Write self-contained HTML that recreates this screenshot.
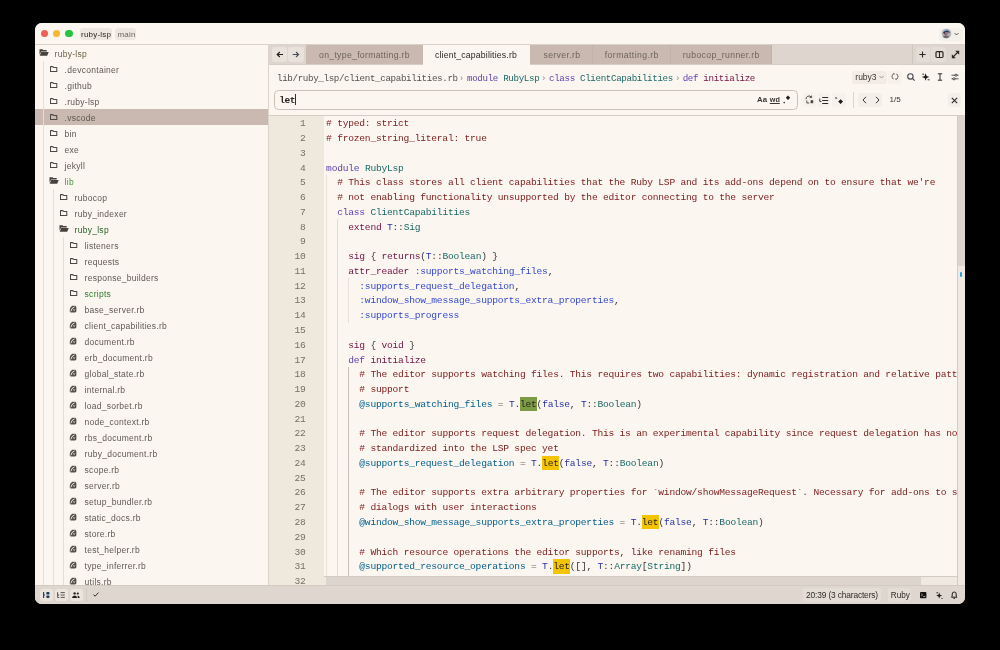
<!DOCTYPE html><html><head><meta charset="utf-8"><style>
*{margin:0;padding:0;box-sizing:border-box}
html,body{width:1000px;height:650px;background:#000;overflow:hidden}
body{position:relative;font-family:"Liberation Sans",sans-serif}
#win{will-change:transform;position:absolute;left:35px;top:23px;width:930px;height:581px;border-radius:7px;overflow:hidden;background:#fbf7f0}
.a{position:absolute;white-space:pre}
svg{display:block;overflow:visible}
.mono{font-family:"Liberation Mono",monospace}
.c{color:#7e2020}
.k{color:#5a3fb0}
.t{color:#1a6868}
.f{color:#721045}
.s{color:#3548cf}
.iv{color:#005e8b}
.b{color:#2630a6}
.hl{color:#2a2520}
.op{color:#6a6460}
.hlc{color:#2a2520}
</style></head><body><div id="win"><div class="a" style="left:0.00px;top:0.00px;width:930.00px;height:21.00px;background:#fbf7f0"></div>
<div class="a" style="left:0.00px;top:21.00px;width:930.00px;height:1.00px;background:#d9d1ca"></div>
<div class="a" style="left:5.50px;top:6.70px;width:7.60px;height:7.60px;background:#ee5f58;border-radius:50%"></div>
<div class="a" style="left:17.80px;top:6.70px;width:7.60px;height:7.60px;background:#f4b932;border-radius:50%"></div>
<div class="a" style="left:30.10px;top:6.70px;width:7.60px;height:7.60px;background:#27c23f;border-radius:50%"></div>
<div class="a" style="left:44.60px;top:4.80px;width:32.40px;height:11.80px;background:#ede7e0;border-radius:3px"></div>
<div class="a" style="left:46.00px;top:5.60px;font-size:8px;letter-spacing:0.22px;line-height:11.5px;color:#221f1c">ruby-lsp</div>
<div class="a" style="left:80.20px;top:4.80px;width:21.20px;height:11.80px;background:#ede7e0;border-radius:3px"></div>
<div class="a" style="left:82.50px;top:5.60px;font-size:8px;letter-spacing:0.2px;line-height:11.5px;color:#6e665f">main</div>
<div class="a" style="left:233.00px;top:22.00px;width:1.00px;height:540.00px;background:#dcd4cc"></div>
<div class="a" style="left:0.00px;top:86.00px;width:233.00px;height:16.00px;background:#c9b9b0"></div>
<div class="a" style="left:8.00px;top:38.00px;width:1.00px;height:524.00px;background:#e5ded6"></div>
<div class="a" style="left:18.00px;top:166.00px;width:1.00px;height:396.00px;background:#e5ded6"></div>
<div class="a" style="left:28.00px;top:214.00px;width:1.00px;height:348.00px;background:#e5ded6"></div>
<div class="a" style="left:4.40px;top:26.30px;line-height:0"><svg width="10" height="7" viewBox="0 0 10 7"><path d="M0.5 0.3h3l0.8 0.8h3.4v1.3H2.2L0.5 5.8z" fill="#46413d"/><path d="M2.3 2.9h7.4l-1.5 3.8H0.7z" fill="#46413d"/></svg></div>
<div class="a" style="left:19.60px;top:22.50px;font-size:8.5px;letter-spacing:0.27px;line-height:16px;color:#6b5f45">ruby-lsp</div>
<div class="a" style="left:14.00px;top:41.80px;line-height:0"><svg width="9" height="8" viewBox="0 0 9 8"><path d="M1.5 1.6h2.3l0.8 0.8h3.2v4.1H1.5z" fill="none" stroke="#4d4844" stroke-width="1.05" stroke-linejoin="round"/></svg></div>
<div class="a" style="left:29.60px;top:38.50px;font-size:8.5px;letter-spacing:0.27px;line-height:16px;color:#5f5852">.devcontainer</div>
<div class="a" style="left:14.00px;top:57.80px;line-height:0"><svg width="9" height="8" viewBox="0 0 9 8"><path d="M1.5 1.6h2.3l0.8 0.8h3.2v4.1H1.5z" fill="none" stroke="#4d4844" stroke-width="1.05" stroke-linejoin="round"/></svg></div>
<div class="a" style="left:29.60px;top:54.50px;font-size:8.5px;letter-spacing:0.27px;line-height:16px;color:#5f5852">.github</div>
<div class="a" style="left:14.00px;top:73.80px;line-height:0"><svg width="9" height="8" viewBox="0 0 9 8"><path d="M1.5 1.6h2.3l0.8 0.8h3.2v4.1H1.5z" fill="none" stroke="#4d4844" stroke-width="1.05" stroke-linejoin="round"/></svg></div>
<div class="a" style="left:29.60px;top:70.50px;font-size:8.5px;letter-spacing:0.27px;line-height:16px;color:#5f5852">.ruby-lsp</div>
<div class="a" style="left:14.00px;top:89.80px;line-height:0"><svg width="9" height="8" viewBox="0 0 9 8"><path d="M1.5 1.6h2.3l0.8 0.8h3.2v4.1H1.5z" fill="none" stroke="#4d4844" stroke-width="1.05" stroke-linejoin="round"/></svg></div>
<div class="a" style="left:29.60px;top:86.50px;font-size:8.5px;letter-spacing:0.27px;line-height:16px;color:#5f5852">.vscode</div>
<div class="a" style="left:14.00px;top:105.80px;line-height:0"><svg width="9" height="8" viewBox="0 0 9 8"><path d="M1.5 1.6h2.3l0.8 0.8h3.2v4.1H1.5z" fill="none" stroke="#4d4844" stroke-width="1.05" stroke-linejoin="round"/></svg></div>
<div class="a" style="left:29.60px;top:102.50px;font-size:8.5px;letter-spacing:0.27px;line-height:16px;color:#5f5852">bin</div>
<div class="a" style="left:14.00px;top:121.80px;line-height:0"><svg width="9" height="8" viewBox="0 0 9 8"><path d="M1.5 1.6h2.3l0.8 0.8h3.2v4.1H1.5z" fill="none" stroke="#4d4844" stroke-width="1.05" stroke-linejoin="round"/></svg></div>
<div class="a" style="left:29.60px;top:118.50px;font-size:8.5px;letter-spacing:0.27px;line-height:16px;color:#5f5852">exe</div>
<div class="a" style="left:14.00px;top:137.80px;line-height:0"><svg width="9" height="8" viewBox="0 0 9 8"><path d="M1.5 1.6h2.3l0.8 0.8h3.2v4.1H1.5z" fill="none" stroke="#4d4844" stroke-width="1.05" stroke-linejoin="round"/></svg></div>
<div class="a" style="left:29.60px;top:134.50px;font-size:8.5px;letter-spacing:0.27px;line-height:16px;color:#5f5852">jekyll</div>
<div class="a" style="left:14.40px;top:154.30px;line-height:0"><svg width="10" height="7" viewBox="0 0 10 7"><path d="M0.5 0.3h3l0.8 0.8h3.4v1.3H2.2L0.5 5.8z" fill="#46413d"/><path d="M2.3 2.9h7.4l-1.5 3.8H0.7z" fill="#46413d"/></svg></div>
<div class="a" style="left:29.60px;top:150.50px;font-size:8.5px;letter-spacing:0.27px;line-height:16px;color:#3f9438">lib</div>
<div class="a" style="left:24.00px;top:169.80px;line-height:0"><svg width="9" height="8" viewBox="0 0 9 8"><path d="M1.5 1.6h2.3l0.8 0.8h3.2v4.1H1.5z" fill="none" stroke="#4d4844" stroke-width="1.05" stroke-linejoin="round"/></svg></div>
<div class="a" style="left:39.60px;top:166.50px;font-size:8.5px;letter-spacing:0.27px;line-height:16px;color:#5f5852">rubocop</div>
<div class="a" style="left:24.00px;top:185.80px;line-height:0"><svg width="9" height="8" viewBox="0 0 9 8"><path d="M1.5 1.6h2.3l0.8 0.8h3.2v4.1H1.5z" fill="none" stroke="#4d4844" stroke-width="1.05" stroke-linejoin="round"/></svg></div>
<div class="a" style="left:39.60px;top:182.50px;font-size:8.5px;letter-spacing:0.27px;line-height:16px;color:#5f5852">ruby_indexer</div>
<div class="a" style="left:24.40px;top:202.30px;line-height:0"><svg width="10" height="7" viewBox="0 0 10 7"><path d="M0.5 0.3h3l0.8 0.8h3.4v1.3H2.2L0.5 5.8z" fill="#46413d"/><path d="M2.3 2.9h7.4l-1.5 3.8H0.7z" fill="#46413d"/></svg></div>
<div class="a" style="left:39.60px;top:198.50px;font-size:8.5px;letter-spacing:0.27px;line-height:16px;color:#265c24">ruby_lsp</div>
<div class="a" style="left:34.00px;top:217.80px;line-height:0"><svg width="9" height="8" viewBox="0 0 9 8"><path d="M1.5 1.6h2.3l0.8 0.8h3.2v4.1H1.5z" fill="none" stroke="#4d4844" stroke-width="1.05" stroke-linejoin="round"/></svg></div>
<div class="a" style="left:49.60px;top:214.50px;font-size:8.5px;letter-spacing:0.27px;line-height:16px;color:#5f5852">listeners</div>
<div class="a" style="left:34.00px;top:233.80px;line-height:0"><svg width="9" height="8" viewBox="0 0 9 8"><path d="M1.5 1.6h2.3l0.8 0.8h3.2v4.1H1.5z" fill="none" stroke="#4d4844" stroke-width="1.05" stroke-linejoin="round"/></svg></div>
<div class="a" style="left:49.60px;top:230.50px;font-size:8.5px;letter-spacing:0.27px;line-height:16px;color:#5f5852">requests</div>
<div class="a" style="left:34.00px;top:249.80px;line-height:0"><svg width="9" height="8" viewBox="0 0 9 8"><path d="M1.5 1.6h2.3l0.8 0.8h3.2v4.1H1.5z" fill="none" stroke="#4d4844" stroke-width="1.05" stroke-linejoin="round"/></svg></div>
<div class="a" style="left:49.60px;top:246.50px;font-size:8.5px;letter-spacing:0.27px;line-height:16px;color:#5f5852">response_builders</div>
<div class="a" style="left:34.00px;top:265.80px;line-height:0"><svg width="9" height="8" viewBox="0 0 9 8"><path d="M1.5 1.6h2.3l0.8 0.8h3.2v4.1H1.5z" fill="none" stroke="#4d4844" stroke-width="1.05" stroke-linejoin="round"/></svg></div>
<div class="a" style="left:49.60px;top:262.50px;font-size:8.5px;letter-spacing:0.27px;line-height:16px;color:#2f7a2c">scripts</div>
<div class="a" style="left:34.20px;top:281.60px;line-height:0"><svg width="8" height="8" viewBox="0 0 8 8"><path d="M1.2 2.8L3.2 0.8h3.2L7.4 2v4.6L6.2 7.4H1.6L0.6 6.2z" fill="#57514c"/><path d="M1.8 6.4Q2.2 3 5.6 1.8" stroke="#f4efe9" stroke-width="0.9" fill="none"/><path d="M3.6 4.4L5.6 4.2 5.4 6z" fill="#f4efe9"/></svg></div>
<div class="a" style="left:49.60px;top:278.50px;font-size:8.5px;letter-spacing:0.27px;line-height:16px;color:#5f5852">base_server.rb</div>
<div class="a" style="left:34.20px;top:297.60px;line-height:0"><svg width="8" height="8" viewBox="0 0 8 8"><path d="M1.2 2.8L3.2 0.8h3.2L7.4 2v4.6L6.2 7.4H1.6L0.6 6.2z" fill="#57514c"/><path d="M1.8 6.4Q2.2 3 5.6 1.8" stroke="#f4efe9" stroke-width="0.9" fill="none"/><path d="M3.6 4.4L5.6 4.2 5.4 6z" fill="#f4efe9"/></svg></div>
<div class="a" style="left:49.60px;top:294.50px;font-size:8.5px;letter-spacing:0.27px;line-height:16px;color:#5f5852">client_capabilities.rb</div>
<div class="a" style="left:34.20px;top:313.60px;line-height:0"><svg width="8" height="8" viewBox="0 0 8 8"><path d="M1.2 2.8L3.2 0.8h3.2L7.4 2v4.6L6.2 7.4H1.6L0.6 6.2z" fill="#57514c"/><path d="M1.8 6.4Q2.2 3 5.6 1.8" stroke="#f4efe9" stroke-width="0.9" fill="none"/><path d="M3.6 4.4L5.6 4.2 5.4 6z" fill="#f4efe9"/></svg></div>
<div class="a" style="left:49.60px;top:310.50px;font-size:8.5px;letter-spacing:0.27px;line-height:16px;color:#5f5852">document.rb</div>
<div class="a" style="left:34.20px;top:329.60px;line-height:0"><svg width="8" height="8" viewBox="0 0 8 8"><path d="M1.2 2.8L3.2 0.8h3.2L7.4 2v4.6L6.2 7.4H1.6L0.6 6.2z" fill="#57514c"/><path d="M1.8 6.4Q2.2 3 5.6 1.8" stroke="#f4efe9" stroke-width="0.9" fill="none"/><path d="M3.6 4.4L5.6 4.2 5.4 6z" fill="#f4efe9"/></svg></div>
<div class="a" style="left:49.60px;top:326.50px;font-size:8.5px;letter-spacing:0.27px;line-height:16px;color:#5f5852">erb_document.rb</div>
<div class="a" style="left:34.20px;top:345.60px;line-height:0"><svg width="8" height="8" viewBox="0 0 8 8"><path d="M1.2 2.8L3.2 0.8h3.2L7.4 2v4.6L6.2 7.4H1.6L0.6 6.2z" fill="#57514c"/><path d="M1.8 6.4Q2.2 3 5.6 1.8" stroke="#f4efe9" stroke-width="0.9" fill="none"/><path d="M3.6 4.4L5.6 4.2 5.4 6z" fill="#f4efe9"/></svg></div>
<div class="a" style="left:49.60px;top:342.50px;font-size:8.5px;letter-spacing:0.27px;line-height:16px;color:#5f5852">global_state.rb</div>
<div class="a" style="left:34.20px;top:361.60px;line-height:0"><svg width="8" height="8" viewBox="0 0 8 8"><path d="M1.2 2.8L3.2 0.8h3.2L7.4 2v4.6L6.2 7.4H1.6L0.6 6.2z" fill="#57514c"/><path d="M1.8 6.4Q2.2 3 5.6 1.8" stroke="#f4efe9" stroke-width="0.9" fill="none"/><path d="M3.6 4.4L5.6 4.2 5.4 6z" fill="#f4efe9"/></svg></div>
<div class="a" style="left:49.60px;top:358.50px;font-size:8.5px;letter-spacing:0.27px;line-height:16px;color:#5f5852">internal.rb</div>
<div class="a" style="left:34.20px;top:377.60px;line-height:0"><svg width="8" height="8" viewBox="0 0 8 8"><path d="M1.2 2.8L3.2 0.8h3.2L7.4 2v4.6L6.2 7.4H1.6L0.6 6.2z" fill="#57514c"/><path d="M1.8 6.4Q2.2 3 5.6 1.8" stroke="#f4efe9" stroke-width="0.9" fill="none"/><path d="M3.6 4.4L5.6 4.2 5.4 6z" fill="#f4efe9"/></svg></div>
<div class="a" style="left:49.60px;top:374.50px;font-size:8.5px;letter-spacing:0.27px;line-height:16px;color:#5f5852">load_sorbet.rb</div>
<div class="a" style="left:34.20px;top:393.60px;line-height:0"><svg width="8" height="8" viewBox="0 0 8 8"><path d="M1.2 2.8L3.2 0.8h3.2L7.4 2v4.6L6.2 7.4H1.6L0.6 6.2z" fill="#57514c"/><path d="M1.8 6.4Q2.2 3 5.6 1.8" stroke="#f4efe9" stroke-width="0.9" fill="none"/><path d="M3.6 4.4L5.6 4.2 5.4 6z" fill="#f4efe9"/></svg></div>
<div class="a" style="left:49.60px;top:390.50px;font-size:8.5px;letter-spacing:0.27px;line-height:16px;color:#5f5852">node_context.rb</div>
<div class="a" style="left:34.20px;top:409.60px;line-height:0"><svg width="8" height="8" viewBox="0 0 8 8"><path d="M1.2 2.8L3.2 0.8h3.2L7.4 2v4.6L6.2 7.4H1.6L0.6 6.2z" fill="#57514c"/><path d="M1.8 6.4Q2.2 3 5.6 1.8" stroke="#f4efe9" stroke-width="0.9" fill="none"/><path d="M3.6 4.4L5.6 4.2 5.4 6z" fill="#f4efe9"/></svg></div>
<div class="a" style="left:49.60px;top:406.50px;font-size:8.5px;letter-spacing:0.27px;line-height:16px;color:#5f5852">rbs_document.rb</div>
<div class="a" style="left:34.20px;top:425.60px;line-height:0"><svg width="8" height="8" viewBox="0 0 8 8"><path d="M1.2 2.8L3.2 0.8h3.2L7.4 2v4.6L6.2 7.4H1.6L0.6 6.2z" fill="#57514c"/><path d="M1.8 6.4Q2.2 3 5.6 1.8" stroke="#f4efe9" stroke-width="0.9" fill="none"/><path d="M3.6 4.4L5.6 4.2 5.4 6z" fill="#f4efe9"/></svg></div>
<div class="a" style="left:49.60px;top:422.50px;font-size:8.5px;letter-spacing:0.27px;line-height:16px;color:#5f5852">ruby_document.rb</div>
<div class="a" style="left:34.20px;top:441.60px;line-height:0"><svg width="8" height="8" viewBox="0 0 8 8"><path d="M1.2 2.8L3.2 0.8h3.2L7.4 2v4.6L6.2 7.4H1.6L0.6 6.2z" fill="#57514c"/><path d="M1.8 6.4Q2.2 3 5.6 1.8" stroke="#f4efe9" stroke-width="0.9" fill="none"/><path d="M3.6 4.4L5.6 4.2 5.4 6z" fill="#f4efe9"/></svg></div>
<div class="a" style="left:49.60px;top:438.50px;font-size:8.5px;letter-spacing:0.27px;line-height:16px;color:#5f5852">scope.rb</div>
<div class="a" style="left:34.20px;top:457.60px;line-height:0"><svg width="8" height="8" viewBox="0 0 8 8"><path d="M1.2 2.8L3.2 0.8h3.2L7.4 2v4.6L6.2 7.4H1.6L0.6 6.2z" fill="#57514c"/><path d="M1.8 6.4Q2.2 3 5.6 1.8" stroke="#f4efe9" stroke-width="0.9" fill="none"/><path d="M3.6 4.4L5.6 4.2 5.4 6z" fill="#f4efe9"/></svg></div>
<div class="a" style="left:49.60px;top:454.50px;font-size:8.5px;letter-spacing:0.27px;line-height:16px;color:#5f5852">server.rb</div>
<div class="a" style="left:34.20px;top:473.60px;line-height:0"><svg width="8" height="8" viewBox="0 0 8 8"><path d="M1.2 2.8L3.2 0.8h3.2L7.4 2v4.6L6.2 7.4H1.6L0.6 6.2z" fill="#57514c"/><path d="M1.8 6.4Q2.2 3 5.6 1.8" stroke="#f4efe9" stroke-width="0.9" fill="none"/><path d="M3.6 4.4L5.6 4.2 5.4 6z" fill="#f4efe9"/></svg></div>
<div class="a" style="left:49.60px;top:470.50px;font-size:8.5px;letter-spacing:0.27px;line-height:16px;color:#5f5852">setup_bundler.rb</div>
<div class="a" style="left:34.20px;top:489.60px;line-height:0"><svg width="8" height="8" viewBox="0 0 8 8"><path d="M1.2 2.8L3.2 0.8h3.2L7.4 2v4.6L6.2 7.4H1.6L0.6 6.2z" fill="#57514c"/><path d="M1.8 6.4Q2.2 3 5.6 1.8" stroke="#f4efe9" stroke-width="0.9" fill="none"/><path d="M3.6 4.4L5.6 4.2 5.4 6z" fill="#f4efe9"/></svg></div>
<div class="a" style="left:49.60px;top:486.50px;font-size:8.5px;letter-spacing:0.27px;line-height:16px;color:#5f5852">static_docs.rb</div>
<div class="a" style="left:34.20px;top:505.60px;line-height:0"><svg width="8" height="8" viewBox="0 0 8 8"><path d="M1.2 2.8L3.2 0.8h3.2L7.4 2v4.6L6.2 7.4H1.6L0.6 6.2z" fill="#57514c"/><path d="M1.8 6.4Q2.2 3 5.6 1.8" stroke="#f4efe9" stroke-width="0.9" fill="none"/><path d="M3.6 4.4L5.6 4.2 5.4 6z" fill="#f4efe9"/></svg></div>
<div class="a" style="left:49.60px;top:502.50px;font-size:8.5px;letter-spacing:0.27px;line-height:16px;color:#5f5852">store.rb</div>
<div class="a" style="left:34.20px;top:521.60px;line-height:0"><svg width="8" height="8" viewBox="0 0 8 8"><path d="M1.2 2.8L3.2 0.8h3.2L7.4 2v4.6L6.2 7.4H1.6L0.6 6.2z" fill="#57514c"/><path d="M1.8 6.4Q2.2 3 5.6 1.8" stroke="#f4efe9" stroke-width="0.9" fill="none"/><path d="M3.6 4.4L5.6 4.2 5.4 6z" fill="#f4efe9"/></svg></div>
<div class="a" style="left:49.60px;top:518.50px;font-size:8.5px;letter-spacing:0.27px;line-height:16px;color:#5f5852">test_helper.rb</div>
<div class="a" style="left:34.20px;top:537.60px;line-height:0"><svg width="8" height="8" viewBox="0 0 8 8"><path d="M1.2 2.8L3.2 0.8h3.2L7.4 2v4.6L6.2 7.4H1.6L0.6 6.2z" fill="#57514c"/><path d="M1.8 6.4Q2.2 3 5.6 1.8" stroke="#f4efe9" stroke-width="0.9" fill="none"/><path d="M3.6 4.4L5.6 4.2 5.4 6z" fill="#f4efe9"/></svg></div>
<div class="a" style="left:49.60px;top:534.50px;font-size:8.5px;letter-spacing:0.27px;line-height:16px;color:#5f5852">type_inferrer.rb</div>
<div class="a" style="left:34.20px;top:553.60px;line-height:0"><svg width="8" height="8" viewBox="0 0 8 8"><path d="M1.2 2.8L3.2 0.8h3.2L7.4 2v4.6L6.2 7.4H1.6L0.6 6.2z" fill="#57514c"/><path d="M1.8 6.4Q2.2 3 5.6 1.8" stroke="#f4efe9" stroke-width="0.9" fill="none"/><path d="M3.6 4.4L5.6 4.2 5.4 6z" fill="#f4efe9"/></svg></div>
<div class="a" style="left:49.60px;top:550.50px;font-size:8.5px;letter-spacing:0.27px;line-height:16px;color:#5f5852">utils.rb</div>
<div class="a" style="left:0.00px;top:562.00px;width:233.00px;height:20.00px;background:#dfd7cf"></div>
<div class="a" style="left:234.00px;top:21.50px;width:696.00px;height:20.00px;background:#dfd5cf"></div>
<div class="a" style="left:234.00px;top:41.00px;width:696.00px;height:1.00px;background:#d6cdc5"></div>
<div class="a" style="left:271.25px;top:21.50px;width:116.65px;height:19.50px;background:#c9b9b0"></div>
<div class="a" style="left:284.00px;top:21.50px;font-size:8.7px;letter-spacing:0.3px;line-height:20px;color:#6e645c">on_type_formatting.rb</div>
<div class="a" style="left:387.90px;top:21.50px;width:107.50px;height:21.00px;background:#fbf7f0"></div>
<div class="a" style="left:400.00px;top:21.50px;font-size:8.7px;letter-spacing:0.17px;line-height:20px;color:#2b2623">client_capabilities.rb</div>
<div class="a" style="left:495.40px;top:21.50px;width:61.90px;height:19.50px;background:#c9b9b0"></div>
<div class="a" style="left:508.50px;top:21.50px;font-size:8.7px;letter-spacing:0.34px;line-height:20px;color:#6e645c">server.rb</div>
<div class="a" style="left:557.30px;top:21.50px;width:78.00px;height:19.50px;background:#c9b9b0"></div>
<div class="a" style="left:569.80px;top:21.50px;font-size:8.7px;letter-spacing:0.4px;line-height:20px;color:#6e645c">formatting.rb</div>
<div class="a" style="left:635.30px;top:21.50px;width:101.40px;height:19.50px;background:#c9b9b0"></div>
<div class="a" style="left:647.80px;top:21.50px;font-size:8.7px;letter-spacing:0.35px;line-height:20px;color:#6e645c">rubocop_runner.rb</div>
<div class="a" style="left:556.80px;top:21.50px;width:1.00px;height:19.50px;background:#bfb3aa"></div>
<div class="a" style="left:634.80px;top:21.50px;width:1.00px;height:19.50px;background:#bfb3aa"></div>
<div class="a" style="left:736.20px;top:21.50px;width:1.00px;height:19.50px;background:#bfb3aa"></div>
<div class="a" style="left:877.30px;top:21.50px;width:1.00px;height:20.00px;background:#cfc6be"></div>
<div class="a mono" style="left:242.00px;top:48.50px;font-size:9.2px;letter-spacing:-0.35px;line-height:14px;color:#55504c">lib/ruby_lsp/client_capabilities.rb</div>
<div class="a" style="left:425.00px;top:48.30px;font-size:9px;line-height:14px;color:#8a827b">›</div>
<div class="a mono" style="left:432.00px;top:48.50px;font-size:9.2px;letter-spacing:-0.35px;line-height:14px;"><span class="k">module</span> <span class="t">RubyLsp</span></div>
<div class="a" style="left:507.20px;top:48.30px;font-size:9px;line-height:14px;color:#8a827b">›</div>
<div class="a mono" style="left:514.00px;top:48.50px;font-size:9.2px;letter-spacing:-0.35px;line-height:14px;"><span class="k">class</span> <span class="t">ClientCapabilities</span></div>
<div class="a" style="left:641.20px;top:48.30px;font-size:9px;line-height:14px;color:#8a827b">›</div>
<div class="a mono" style="left:647.70px;top:48.50px;font-size:9.2px;letter-spacing:-0.35px;line-height:14px;"><span class="k">def</span> <span class="f">initialize</span></div>
<div class="a" style="left:817.00px;top:47.50px;width:35.00px;height:13.00px;background:#f2ece5;border-radius:3px"></div>
<div class="a" style="left:820.30px;top:47.00px;font-size:8.5px;line-height:14px;color:#3b3632">ruby3</div>
<div class="a" style="left:844px;top:52px;line-height:0"><svg width="5" height="4" viewBox="0 0 5 4"><path d="M0.5 1l2 2 2-2" stroke="#8a827b" stroke-width="0.8" fill="none"/></svg></div>
<div class="a" style="left:852.50px;top:47.50px;width:14.00px;height:13.00px;background:#f6f1ea;border-radius:3px"></div>
<div class="a" style="left:856px;top:50px;line-height:0"><svg width="8" height="7" viewBox="0 0 8 7"><path d="M2.6 0.9A2.9 2.9 0 0 0 2.6 6.1M5.4 0.9A2.9 2.9 0 0 1 5.4 6.1" stroke="#7a736c" stroke-width="1.1" fill="none"/><path d="M2 0.4h1.4v1.2M6 6.6H4.6V5.4" stroke="#7a736c" stroke-width="0.8" fill="none"/></svg></div>
<div class="a" style="left:872px;top:50px;line-height:0"><svg width="8" height="8" viewBox="0 0 8 8"><circle cx="3.4" cy="3.4" r="2.7" stroke="#454552" stroke-width="1.1" fill="none"/><path d="M5.4 5.4l2.2 2.2" stroke="#454552" stroke-width="1.2"/></svg></div>
<div class="a" style="left:887px;top:50px;line-height:0"><svg width="8" height="8" viewBox="0 0 8 8"><path d="M3.6 0.2L4.6 3 7.4 4 4.6 5 3.6 7.8 2.6 5 -0.2 4 2.6 3z" fill="#1f1c1a"/><path d="M0.3 1.2h1.8M5.6 6.8h2" stroke="#1f1c1a" stroke-width="0.9"/></svg></div>
<div class="a" style="left:902px;top:50px;line-height:0"><svg width="6" height="8" viewBox="0 0 6 8"><path d="M0.8 0.8h4.4M0.8 7.2h4.4M3 0.8v6.4" stroke="#2f2b28" stroke-width="1"/></svg></div>
<div class="a" style="left:916px;top:50px;line-height:0"><svg width="8" height="8" viewBox="0 0 8 8"><path d="M0.5 2.2h7M0.5 5.8h7" stroke="#2f2b28" stroke-width="0.8"/><circle cx="5" cy="2.2" r="1.1" fill="#fbf7f0" stroke="#2f2b28" stroke-width="0.8"/><circle cx="3" cy="5.8" r="1.1" fill="#fbf7f0" stroke="#2f2b28" stroke-width="0.8"/></svg></div>
<div class="a" style="left:239.00px;top:67.00px;width:524.00px;height:19.60px;border:1px solid #c9c0b7;border-radius:4.5px"></div>
<div class="a mono" style="left:244.20px;top:70.70px;font-size:9.6px;font-weight:bold;letter-spacing:-0.5px;line-height:14px;color:#2b2623">let</div>
<div class="a" style="left:260.00px;top:71.00px;width:1.20px;height:11.40px;background:#7a1020"></div>
<div class="a" style="left:722.00px;top:70.00px;font-size:7.8px;font-weight:bold;line-height:14px;color:#3a3532">Aa</div>
<div class="a" style="left:734.80px;top:70.00px;font-size:7.2px;font-weight:bold;line-height:14px;color:#3a3532;text-decoration:underline">wd</div>
<div class="a" style="left:747px;top:72px;line-height:0"><svg width="9" height="9" viewBox="0 0 9 9"><circle cx="2.2" cy="7.6" r="0.8" fill="#2f2b28"/><path d="M6 0.6L8.2 2.8 6 5 3.8 2.8z" fill="#1f1c1a"/></svg></div>
<div class="a" style="left:768.00px;top:70.00px;width:13.00px;height:14.00px;background:#f6f1ea;border-radius:3px"></div>
<div class="a" style="left:770px;top:72px;line-height:0"><svg width="9" height="9" viewBox="0 0 9 9"><path d="M1 4.2A3 3 0 0 1 6.2 2" stroke="#4b4541" stroke-width="1" fill="none"/><path d="M6.6 0.6v2h-2" stroke="#4b4541" stroke-width="0.9" fill="none"/><path d="M1.8 5.5v2.5h2.5" stroke="#4b4541" stroke-width="0.9" fill="none"/><rect x="5.6" y="5.2" width="2.6" height="3" fill="#4b4541"/></svg></div>
<div class="a" style="left:782.00px;top:70.00px;width:13.00px;height:14.00px;background:#f6f1ea;border-radius:3px"></div>
<div class="a" style="left:784px;top:73px;line-height:0"><svg width="10" height="8" viewBox="0 0 10 8"><path d="M3.2 1.5h6M3.2 4.5h6M3.2 7.5h6" stroke="#2f2b28" stroke-width="1"/><path d="M0.8 2.5v3h1.6" stroke="#2f2b28" stroke-width="0.9" fill="none"/></svg></div>
<div class="a" style="left:796.50px;top:70.00px;width:14.00px;height:14.00px;background:#f6f1ea;border-radius:3px"></div>
<div class="a" style="left:800px;top:73px;line-height:0"><svg width="9" height="8" viewBox="0 0 9 8"><text x="0" y="3.4" font-size="4.4" font-weight="bold" font-family="Liberation Sans" fill="#2f2b28">s</text><path d="M5.6 3.2l2.4 2.4-2.4 2.4-2.4-2.4z" fill="#1f1c1a"/></svg></div>
<div class="a" style="left:817.50px;top:69.00px;width:1.00px;height:16.00px;background:#ddd5cd"></div>
<div class="a" style="left:823.00px;top:70.00px;width:24.00px;height:14.00px;background:#f3eee7;border-radius:3px"></div>
<div class="a" style="left:827px;top:73px;line-height:0"><svg width="5" height="8" viewBox="0 0 5 8"><path d="M4 0.8L1 4l3 3.2" stroke="#3a3532" stroke-width="1" fill="none"/></svg></div>
<div class="a" style="left:840px;top:73px;line-height:0"><svg width="5" height="8" viewBox="0 0 5 8"><path d="M1 0.8L4 4 1 7.2" stroke="#3a3532" stroke-width="1" fill="none"/></svg></div>
<div class="a" style="left:854.60px;top:70.00px;font-size:8.1px;line-height:14px;color:#3a3532">1/5</div>
<div class="a" style="left:913.00px;top:70.00px;width:13.00px;height:14.00px;background:#f3eee7;border-radius:3px"></div>
<div class="a" style="left:916px;top:74px;line-height:0"><svg width="7" height="7" viewBox="0 0 7 7"><path d="M0.8 0.8l5.4 5.4M6.2 0.8L0.8 6.2" stroke="#2f2b28" stroke-width="1.1"/></svg></div>
<div class="a" style="left:234.00px;top:92.00px;width:696.00px;height:1.00px;background:#d6cdc5"></div>
<div class="a" style="left:234.00px;top:93.00px;width:55.00px;height:469.00px;background:#efe9dd"></div>
<div class="a" style="left:291.20px;top:151.98px;width:1.00px;height:410.02px;background:#e8e1d9"></div>
<div class="a" style="left:302.20px;top:196.29px;width:1.00px;height:365.71px;background:#e4dcd4"></div>
<div class="a" style="left:313.20px;top:255.37px;width:1.00px;height:44.31px;background:#e8e1d9"></div>
<div class="a" style="left:313.20px;top:343.99px;width:1.00px;height:218.01px;background:#c9c0b8"></div>
<div class="a" style="left:485.10px;top:373.73px;width:16.62px;height:14.40px;background:#7d9a45"></div>
<div class="a" style="left:507.26px;top:432.81px;width:16.62px;height:14.40px;background:#f5c400"></div>
<div class="a" style="left:606.98px;top:491.89px;width:16.62px;height:14.40px;background:#f5c400"></div>
<div class="a" style="left:518.34px;top:536.20px;width:16.62px;height:14.40px;background:#f5c400"></div>
<div class="a mono" style="left:291.10px;top:94.30px;width:638.6px;height:467.7px;overflow:hidden;font-size:9.6px;letter-spacing:-0.22px;line-height:14.77px;color:#3a3432"><div style="height:14.77px"><span class="c"># typed: strict</span></div><div style="height:14.77px"><span class="c"># frozen_string_literal: true</span></div><div style="height:14.77px"> </div><div style="height:14.77px"><span class="k">module</span> <span class="t">RubyLsp</span></div><div style="height:14.77px">  <span class="c"># This class stores all client capabilities that the Ruby LSP and its add-ons depend on to ensure that we're</span></div><div style="height:14.77px">  <span class="c"># not enabling functionality unsupported by the editor connecting to the server</span></div><div style="height:14.77px">  <span class="k">class</span> <span class="t">ClientCapabilities</span></div><div style="height:14.77px">    <span class="f">extend</span> <span class="b">T</span>::<span class="t">Sig</span></div><div style="height:14.77px"> </div><div style="height:14.77px">    <span class="f">sig</span> { <span class="f">returns</span>(<span class="b">T</span>::<span class="t">Boolean</span>) }</div><div style="height:14.77px">    <span class="f">attr_reader</span> <span class="s">:supports_watching_files</span>,</div><div style="height:14.77px">      <span class="s">:supports_request_delegation</span>,</div><div style="height:14.77px">      <span class="s">:window_show_message_supports_extra_properties</span>,</div><div style="height:14.77px">      <span class="s">:supports_progress</span></div><div style="height:14.77px"> </div><div style="height:14.77px">    <span class="f">sig</span> { <span class="f">void</span> }</div><div style="height:14.77px">    <span class="k">def</span> <span class="f">initialize</span></div><div style="height:14.77px">      <span class="c"># The editor supports watching files. This requires two capabilities: dynamic registration and relative patterns</span></div><div style="height:14.77px">      <span class="c"># support</span></div><div style="height:14.77px">      <span class="iv">@supports_watching_files</span> <span class="op">=</span> <span class="b">T</span>.<span class="hlc">let</span>(<span class="b">false</span>, <span class="b">T</span>::<span class="t">Boolean</span>)</div><div style="height:14.77px"> </div><div style="height:14.77px">      <span class="c"># The editor supports request delegation. This is an experimental capability since request delegation has not been</span></div><div style="height:14.77px">      <span class="c"># standardized into the LSP spec yet</span></div><div style="height:14.77px">      <span class="iv">@supports_request_delegation</span> <span class="op">=</span> <span class="b">T</span>.<span class="hl">let</span>(<span class="b">false</span>, <span class="b">T</span>::<span class="t">Boolean</span>)</div><div style="height:14.77px"> </div><div style="height:14.77px">      <span class="c"># The editor supports extra arbitrary properties for `window/showMessageRequest`. Necessary for add-ons to show</span></div><div style="height:14.77px">      <span class="c"># dialogs with user interactions</span></div><div style="height:14.77px">      <span class="iv">@window_show_message_supports_extra_properties</span> <span class="op">=</span> <span class="b">T</span>.<span class="hl">let</span>(<span class="b">false</span>, <span class="b">T</span>::<span class="t">Boolean</span>)</div><div style="height:14.77px"> </div><div style="height:14.77px">      <span class="c"># Which resource operations the editor supports, like renaming files</span></div><div style="height:14.77px">      <span class="iv">@supported_resource_operations</span> <span class="op">=</span> <span class="b">T</span>.<span class="hl">let</span>([], <span class="b">T</span>::<span class="t">Array</span>[<span class="t">String</span>])</div><div style="height:14.77px"> </div></div>
<div class="a mono" style="left:234px;top:94.30px;width:36.5px;text-align:right;font-size:9.6px;letter-spacing:-0.22px;line-height:14.77px;color:#756e67"><div style="height:14.77px">1</div><div style="height:14.77px">2</div><div style="height:14.77px">3</div><div style="height:14.77px">4</div><div style="height:14.77px">5</div><div style="height:14.77px">6</div><div style="height:14.77px">7</div><div style="height:14.77px">8</div><div style="height:14.77px">9</div><div style="height:14.77px">10</div><div style="height:14.77px">11</div><div style="height:14.77px">12</div><div style="height:14.77px">13</div><div style="height:14.77px">14</div><div style="height:14.77px">15</div><div style="height:14.77px">16</div><div style="height:14.77px">17</div><div style="height:14.77px">18</div><div style="height:14.77px">19</div><div style="height:14.77px">20</div><div style="height:14.77px">21</div><div style="height:14.77px">22</div><div style="height:14.77px">23</div><div style="height:14.77px">24</div><div style="height:14.77px">25</div><div style="height:14.77px">26</div><div style="height:14.77px">27</div><div style="height:14.77px">28</div><div style="height:14.77px">29</div><div style="height:14.77px">30</div><div style="height:14.77px">31</div><div style="height:14.77px">32</div></div>
<div class="a" style="left:921.50px;top:93.00px;width:8.50px;height:469.00px;background:#efe9e2"></div>
<div class="a" style="left:921.50px;top:93.00px;width:1.00px;height:469.00px;background:#d3cac2"></div>
<div class="a" style="left:922.50px;top:93.00px;width:7.50px;height:150.00px;background:#ddd5cd"></div>
<div class="a" style="left:924.60px;top:249.00px;width:2.80px;height:4.50px;background:#2aa3d6;border-radius:1px"></div>
<div class="a" style="left:289.00px;top:553.00px;width:632.50px;height:9.00px;background:#efe9e2"></div>
<div class="a" style="left:291.00px;top:553.00px;width:595.00px;height:9.00px;background:#ddd5cd"></div>
<div class="a" style="left:289.00px;top:553.00px;width:632.50px;height:1.00px;background:#d3cac2"></div>
<div class="a" style="left:0.00px;top:562.00px;width:930.00px;height:19.00px;background:#dfd7cf"></div>
<div class="a" style="left:0.00px;top:562.00px;width:930.00px;height:1.00px;background:#d3cac2"></div>
<div class="a" style="left:5.00px;top:566.00px;width:13.00px;height:12.00px;background:#ebe5de;border-radius:3px"></div>
<div class="a" style="left:19.50px;top:566.00px;width:13.50px;height:12.00px;background:#ebe5de;border-radius:3px"></div>
<div class="a" style="left:34.50px;top:566.00px;width:13.50px;height:12.00px;background:#ebe5de;border-radius:3px"></div>
<div class="a" style="left:8px;top:569px;line-height:0"><svg width="7" height="6" viewBox="0 0 7 6"><path d="M0.6 0v6" stroke="#243a5c" stroke-width="1.1"/><path d="M0.6 2l1.6 1-1.6 1z" fill="#243a5c"/><rect x="3.3" y="0" width="3.2" height="2.6" rx="0.9" fill="#243a5c"/><rect x="3.3" y="3.4" width="3.2" height="2.6" rx="0.9" fill="#243a5c"/></svg></div>
<div class="a" style="left:22px;top:569px;line-height:0"><svg width="8" height="6" viewBox="0 0 8 6"><path d="M0.6 0.2v5.3h1.6M0.6 3h1.6" stroke="#4b4541" stroke-width="0.9" fill="none"/><path d="M3.6 0.6h4.2M3.6 3h4.2M3.6 5.4h4.2" stroke="#4b4541" stroke-width="0.9"/></svg></div>
<div class="a" style="left:37px;top:569px;line-height:0"><svg width="8" height="6" viewBox="0 0 8 6"><circle cx="2.6" cy="1.4" r="1.2" fill="#1f1c1a"/><circle cx="5.8" cy="1.5" r="1.1" fill="#1f1c1a"/><path d="M0 5.9Q0.3 3.5 2.6 3.4Q4.9 3.5 5.2 5.9z" fill="#1f1c1a"/><path d="M5.4 3.4Q7.6 3.4 7.8 5.9H5.8Q5.8 4.4 5.4 3.4z" fill="#1f1c1a"/></svg></div>
<div class="a" style="left:50.50px;top:565.00px;width:1.00px;height:14.00px;background:#d3cac2"></div>
<div class="a" style="left:58px;top:569px;line-height:0"><svg width="6" height="5" viewBox="0 0 6 5"><path d="M0.5 2.6l1.6 1.6L5.5 0.6" stroke="#2f2b28" stroke-width="1" fill="none"/></svg></div>
<div class="a" style="left:768.00px;top:565.00px;width:78.00px;height:14.00px;background:#e4ddd5;border-radius:3px"></div>
<div class="a" style="left:771.00px;top:565.00px;font-size:8.4px;letter-spacing:-0.15px;line-height:14px;color:#2f2b28">20:39 (3 characters)</div>
<div class="a" style="left:853.00px;top:565.00px;width:23.00px;height:14.00px;background:#e4ddd5;border-radius:3px"></div>
<div class="a" style="left:855.80px;top:566.00px;font-size:8.2px;line-height:14px;color:#2f2b28">Ruby</div>
<div class="a" style="left:885px;top:569px;line-height:0"><svg width="7" height="7" viewBox="0 0 7 7"><rect x="0" y="0" width="6.4" height="6.2" rx="0.9" fill="#141210"/><path d="M1.3 1.9l1.2 1-1.2 1M3.2 4.6h2" stroke="#f2ede6" stroke-width="0.7" fill="none"/></svg></div>
<div class="a" style="left:900px;top:568px;line-height:0"><svg width="9" height="9" viewBox="0 0 9 9"><path d="M4.2 1.6L5 3.8 7.2 4.6 5 5.4 4.2 7.6 3.4 5.4 1.2 4.6 3.4 3.8z" fill="#1f1c1a"/><path d="M1.4 1.8h1.8M6.4 7.4h1.2" stroke="#1f1c1a" stroke-width="0.9"/></svg></div>
<div class="a" style="left:916px;top:568px;line-height:0"><svg width="7" height="8" viewBox="0 0 7 8"><path d="M3.2 1a2 2 0 0 1 2 2v2.2l0.8 1H0.4l0.8-1V3a2 2 0 0 1 2-2z" fill="none" stroke="#1f1c1a" stroke-width="1"/><path d="M2.4 7.4h1.6" stroke="#1f1c1a" stroke-width="0.9"/></svg></div>
<div class="a" style="left:236.50px;top:24.00px;width:15.50px;height:15.00px;background:#e9e2db;border-radius:3px"></div>
<div class="a" style="left:241px;top:28px;line-height:0"><svg width="8" height="7" viewBox="0 0 8 7"><path d="M7 3.5H1.4M3.8 1L1.2 3.5 3.8 6" stroke="#1f1c1a" stroke-width="1.1" fill="none"/></svg></div>
<div class="a" style="left:253.00px;top:24.00px;width:16.00px;height:15.00px;background:#e9e2db;border-radius:3px"></div>
<div class="a" style="left:257px;top:28px;line-height:0"><svg width="8" height="7" viewBox="0 0 8 7"><path d="M0.6 3.5H6.4M4 1l2.6 2.5L4 6" stroke="#4a4d5c" stroke-width="1.1" fill="none"/></svg></div>
<div class="a" style="left:881.00px;top:24.00px;width:14.00px;height:15.00px;background:#e4dcd6;border-radius:3px"></div>
<div class="a" style="left:884px;top:28px;line-height:0"><svg width="8" height="7" viewBox="0 0 8 7"><path d="M3.5 0.4v6.2M0.4 3.5h6.2" stroke="#2a2623" stroke-width="1.1"/></svg></div>
<div class="a" style="left:896.00px;top:24.00px;width:14.50px;height:15.00px;background:#e4dcd6;border-radius:3px"></div>
<div class="a" style="left:900px;top:28px;line-height:0"><svg width="8" height="7" viewBox="0 0 8 7"><rect x="1" y="0.6" width="7" height="5.9" rx="1.1" fill="none" stroke="#2a2623" stroke-width="1.2"/><path d="M4.5 0.6v5.9" stroke="#2a2623" stroke-width="1.1"/></svg></div>
<div class="a" style="left:916px;top:27px;line-height:0"><svg width="9" height="9" viewBox="0 0 9 9"><path d="M7 2L2 7" stroke="#2a2623" stroke-width="1.1"/><path d="M4.2 0.8h4v4z" fill="#2a2623"/><path d="M0.8 4.2v4h4z" fill="#2a2623"/></svg></div>
<div class="a" style="left:904.00px;top:4.50px;width:23.50px;height:13.00px;background:#f4efe8;border-radius:3px"></div>
<div class="a" style="left:906px;top:5px;line-height:0"><svg width="11" height="11" viewBox="0 0 11 11"><circle cx="5.5" cy="5.5" r="4.8" fill="#aeb3b6"/><path d="M2.4 2.6Q5 -0.4 8.2 2.4Q6 2.2 5 3.2Q3.6 2.4 2.4 2.6z" fill="#9cc0e0"/><path d="M2.6 4.2Q4 1.8 6.4 2.6Q8.4 3 8.8 5Q6 3.6 4.6 4.6Q3.4 4.8 2.6 4.2z" fill="#2a3a5a"/><circle cx="4.8" cy="5.8" r="2.1" fill="#96707e"/><circle cx="3.2" cy="4.6" r="0.9" fill="#2a2830"/><path d="M1.6 8.4Q5 6.8 8.4 8.6Q7 10.4 5 10.2Q2.8 10 1.6 8.4z" fill="#6a6a6a"/></svg></div>
<div class="a" style="left:919px;top:9px;line-height:0"><svg width="5" height="4" viewBox="0 0 5 4"><path d="M0.5 1l2 2 2-2" stroke="#3a3532" stroke-width="0.8" fill="none"/></svg></div></div></body></html>
